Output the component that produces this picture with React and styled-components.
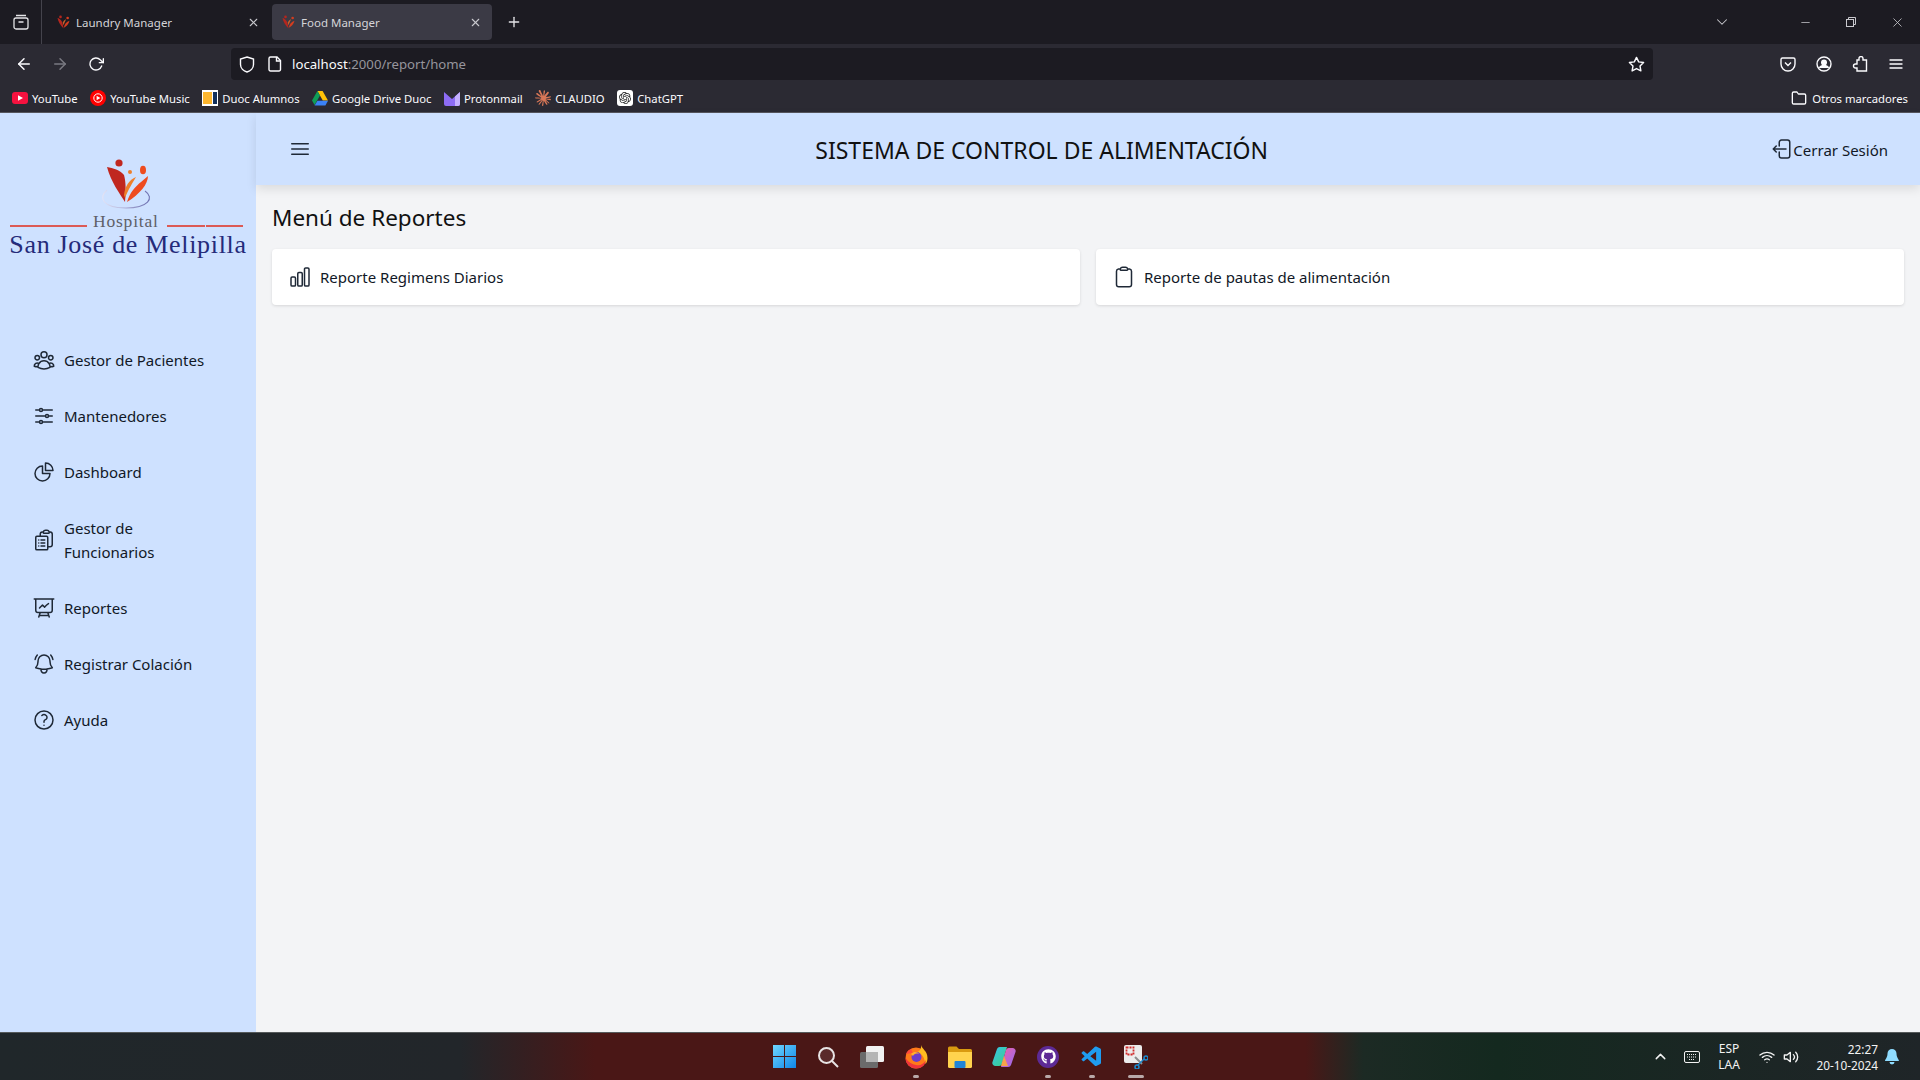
import React from 'react'
import styled, { createGlobalStyle } from 'styled-components'
import {
  HiOutlineUserGroup,
  HiOutlineAdjustmentsHorizontal,
  HiOutlineChartPie,
  HiOutlineClipboardDocumentList,
  HiOutlinePresentationChartLine,
  HiOutlineBellAlert,
  HiOutlineQuestionMarkCircle,
  HiOutlineChartBar,
  HiOutlineClipboard,
  HiOutlineArrowLeftStartOnRectangle,
  HiOutlineBars3,
} from 'react-icons/hi2'
import { FiArrowLeft, FiArrowRight, FiRotateCw, FiStar, FiX, FiPlus, FiChevronDown, FiChevronUp, FiMinus, FiFolder, FiMenu, FiWifi, FiVolume2 } from 'react-icons/fi'
import { SiClaude, SiOpenai } from 'react-icons/si'
import { FaGithub } from 'react-icons/fa'
import { VscVscode } from 'react-icons/vsc'

const Global = createGlobalStyle`
html, body { margin: 0; padding: 0; background: #f3f4f6; }
* { box-sizing: border-box; }
body { font-family: "Noto Sans", "Open Sans", sans-serif; color: #111827; }
`

const Screen = styled.div`
width: 1920px;
height: 1080px;
display: flex;
flex-direction: column;
overflow: hidden;
`

/* browser chrome */
const TabBar = styled.div`
height: 44px;
flex: none;
background: #1c1b22;
display: flex;
align-items: flex-start;
color: #fbfbfe;
`
const TabsButton = styled.div`
width: 42px;
height: 44px;
display: flex;
align-items: center;
justify-content: center;
border-right: 1px solid #44434c;
margin-right: 5px;
`
const Tab = styled.div`
width: ${p => p.$width}px;
height: 36px;
margin-top: 4px;
margin-right: ${p => p.$gap || 0}px;
border-radius: 4px;
padding: 0 10px 0 9px;
display: flex;
align-items: center;
gap: 5px;
background: ${p => (p.$active ? '#3b3a45' : 'transparent')};
font-size: 11.5px;
color: #d4d4d8;
`
const TabTitle = styled.span`
flex: 1;
`
const NewTab = styled.div`
width: 44px;
height: 44px;
display: flex;
align-items: center;
justify-content: center;
`
const WindowControls = styled.div`
margin-left: auto;
display: flex;
align-items: center;
height: 44px;
color: #c9c9ce;
`
const ListAll = styled.div`
display: flex;
margin-right: 51px;
`
const WinButton = styled.div`
width: 46px;
display: flex;
justify-content: center;
`
const NavBar = styled.div`
height: 44px;
flex: none;
background: #2b2a33;
display: flex;
align-items: center;
color: #fbfbfe;
padding: 0 0 4px 6px;
`
const NavButton = styled.div`
width: 36px;
display: flex;
justify-content: center;
color: ${p => (p.$off ? '#7a7a82' : '#fbfbfe')};
`
const UrlBar = styled.div`
width: 1422px;
height: 32px;
margin-left: 117px;
background: #1c1b22;
border-radius: 4px;
display: flex;
align-items: center;
padding: 0 6px 0 2px;
font-size: 13.2px;
`
const UrlIcon = styled.div`
width: 28px;
display: flex;
justify-content: center;
margin-right: ${p => p.$gap || 0}px;
`
const UrlHost = styled.span`
color: #fbfbfe;
`
const UrlPath = styled.span`
color: #96959c;
`
const UrlStar = styled.div`
margin-left: auto;
display: flex;
margin-right: 2px;
`
const NavTools = styled.div`
display: flex;
margin-left: 117px;
`
const NavTool = styled.div`
width: 36px;
display: flex;
justify-content: center;
`
const Bookmarks = styled.div`
height: 25px;
flex: none;
background: #2b2a33;
border-bottom: 1px solid #56565e;
display: flex;
align-items: center;
padding: 0 12px 4px 12px;
font-size: 11.3px;
color: #fbfbfe;
`
const Bookmark = styled.div`
display: flex;
align-items: center;
gap: 4px;
margin-right: ${p => p.$gap}px;
`
const OtherBookmarks = styled.div`
margin-left: auto;
display: flex;
align-items: center;
gap: 5px;
`

/* app */
const App_ = styled.div`
flex: 1;
min-height: 0;
display: flex;
`
const Sidebar = styled.aside`
width: 256px;
flex: none;
background: #cee1ff;
display: flex;
flex-direction: column;
`
const LogoBox = styled.div`
height: 227px;
padding: 45px 10px 0 10px;
display: flex;
flex-direction: column;
align-items: center;
`
const Emblem = styled.svg`
width: 60px;
height: 56px;
display: block;
`
const RuleRow = styled.div`
width: 236px;
height: 20px;
margin-top: 2px;
display: flex;
align-items: center;
gap: 1px;
`
const Rule = styled.div`
height: 2px;
background: #dc5a55;
width: ${p => p.$width}px;
`
const HospitalWord = styled.div`
font-family: "Liberation Serif", serif;
font-size: 17.5px;
line-height: 20px;
letter-spacing: 0.8px;
color: #5f6068;
margin: -11px 7px 0 5px;
`
const HospitalName = styled.div`
font-family: "Liberation Serif", serif;
font-size: 26px;
line-height: 28px;
margin-top: -5px;
letter-spacing: 0.68px;
white-space: nowrap;
color: #252b7a;
`
const NavList = styled.nav`
display: flex;
flex-direction: column;
gap: 16px;
padding: 0 16px;
`
const NavItem = styled.div`
display: flex;
align-items: center;
gap: 8px;
padding: 8px 16px;
font-size: 15px;
line-height: 24px;
svg { flex: none; width: 24px; height: 24px; color: #1f2937; }
`
const Content = styled.div`
flex: 1;
min-width: 0;
display: flex;
flex-direction: column;
background: #f3f4f6;
`
const Header = styled.header`
height: 72px;
flex: none;
background: #cee1ff;
box-shadow: 0 4px 10px rgba(0, 0, 0, 0.1);
display: flex;
align-items: center;
padding: 0 32px 0 32px;
z-index: 1;
`
const MenuButton = styled.div`
display: flex;
color: #1f2937;
`
const HeaderTitle = styled.h1`
flex: 1;
margin: 0;
padding-top: 2px;
text-align: center;
font-weight: 400;
font-size: 23px;
color: #111;
`
const Logout = styled.div`
display: flex;
align-items: center;
font-size: 15px;
color: #111827;
svg { color: #1f2937; margin-right: -2px; }
`
const LogoutLabel = styled.span`
padding-top: 2px;
`
const Main = styled.main`
padding: 17px 16px 16px;
`
const PageTitle = styled.h2`
margin: 0 0 15px 0;
font-weight: 400;
font-size: 22.5px;
line-height: 32px;
color: #111;
`
const CardGrid = styled.div`
display: grid;
grid-template-columns: 1fr 1fr;
gap: 16px;
`
const Card = styled.div`
height: 56px;
background: #fff;
border-radius: 4px;
box-shadow: 0 1px 3px rgba(0, 0, 0, 0.12);
display: flex;
align-items: center;
gap: 8px;
padding: 0 16px;
font-size: 15px;
svg { color: #1f2937; }
`

/* taskbar */
const Taskbar = styled.div`
height: 48px;
flex: none;
position: relative;
border-top: 1px solid #55595a;
background: linear-gradient(90deg, #20272a 0%, #22262a 24%, #4a1716 31%, #4a1716 68%, #1c2a24 71%, #14291f 78%, #1b2624 90%, #1f2528 100%);
display: flex;
align-items: center;
justify-content: flex-end;
padding-right: 14px;
color: #f3f3f3;
`
const TaskApps = styled.div`
position: absolute;
left: 762px;
top: 0;
display: flex;
`
const TaskApp = styled.div`
width: 44px;
height: 47px;
display: flex;
align-items: center;
justify-content: center;
position: relative;
`
const RunDot = styled.div`
position: absolute;
left: 50%;
bottom: 2px;
transform: translateX(-50%);
width: ${p => (p.$wide ? 16 : 6)}px;
height: 3px;
border-radius: 2px;
background: #b9a9a9;
`
const GithubBadge = styled.div`
width: 22px;
height: 22px;
border-radius: 50%;
background: #5d2a96;
display: flex;
align-items: center;
justify-content: center;
color: #fff;
`
const ChatBadge = styled.div`
width: 16px;
height: 16px;
border-radius: 3px;
background: #fff;
display: flex;
align-items: center;
justify-content: center;
color: #222;
`
const Tray = styled.div`
display: flex;
align-items: center;
`
const TrayIcon = styled.div`
display: flex;
justify-content: center;
width: ${p => p.$width}px;
`
const Lang = styled.div`
width: 40px;
margin: 0 6px 0 3px;
text-align: center;
font-size: 12px;
line-height: 16px;
`
const Clock = styled.div`
width: 70px;
margin-left: 5px;
text-align: right;
font-size: 11.8px;
line-height: 16px;
white-space: nowrap;
`

const Favicon = () => (
  <svg width="15" height="15" viewBox="0 0 40 40">
    <path d="M4 8 C12 10 18 16 20 36 C12 28 6 18 4 8Z" fill="#b5261e" />
    <path d="M21 34 C22 24 28 18 36 15 C34 24 28 30 21 34Z" fill="#d43d1f" />
    <path d="M18 20 C20 15 23 13 27 11 C24 16 22 22 20 27Z" fill="#c9602a" />
    <circle cx="12" cy="5" r="3.5" fill="#b5261e" />
    <circle cx="31" cy="8" r="3.5" fill="#d43d1f" />
  </svg>
)

const Logo = () => (
  <Emblem viewBox="0 0 60 56">
    <defs>
      <linearGradient id="ring" x1="0" x2="1">
        <stop offset="0" stopColor="#e2e3f5" />
        <stop offset="1" stopColor="#6d6fb0" />
      </linearGradient>
    </defs>
    <path d="M9 32 C0 40 5 50 28 50 C50 50 57 40 47 33" fill="none" stroke="url(#ring)" strokeWidth="1.1" />
    <path d="M9 9 C15 10 22 12 26 17 C28 24 28 34 27 44 C22 36 13 24 9 9Z" fill="#c0271f" />
    <path d="M29 44 C32 34 38 28 43 24 L50 18 C50 26 42 36 29 44Z" fill="#ee4b1f" />
    <path d="M26 37 C27 28 31 22 38 19 C34 26 31 30 27 40Z" fill="#ee7f2b" />
    <circle cx="21" cy="5" r="3.6" fill="#c0271f" />
    <circle cx="32" cy="14" r="2" fill="#ee7f2b" />
    <ellipse cx="45" cy="12" rx="3" ry="4.3" fill="#ee4b1f" />
  </Emblem>
)

const YouTubeIcon = () => (
  <svg width="16" height="12" viewBox="0 0 16 12"><rect width="16" height="12" rx="3" fill="#f5123f" /><path d="M6 3.2 11 6 6 8.8Z" fill="#fff" /></svg>
)
const YouTubeMusicIcon = () => (
  <svg width="16" height="16" viewBox="0 0 16 16"><circle cx="8" cy="8" r="8" fill="#f00" /><circle cx="8" cy="8" r="4.2" fill="none" stroke="#fff" strokeWidth="1" /><path d="M6.6 5.8 10.4 8 6.6 10.2Z" fill="#fff" /></svg>
)
const DuocIcon = () => (
  <svg width="16" height="16" viewBox="0 0 16 16"><rect width="16" height="16" fill="#fff" /><rect x="1" y="2" width="9" height="12" fill="#fdb62f" /><rect x="11" y="2" width="4" height="12" fill="#14315c" /></svg>
)
const DriveIcon = () => (
  <svg width="16" height="15" viewBox="0 0 16 15"><path d="M5.4 0h5.2l5.4 9.5h-5.2Z" fill="#ffc107" /><path d="M5.4 0 0 9.5 2.6 14 8 4.6Z" fill="#0f9d58" /><path d="M2.6 14.5h10.8L16 9.8H5.4Z" fill="#3b82f6" /></svg>
)
const ProtonIcon = () => (
  <svg width="16" height="15" viewBox="0 0 16 15"><path d="M0 1 8 8l8-7v12a2 2 0 0 1-2 2H2a2 2 0 0 1-2-2Z" fill="#8d6cf5" /><path d="M16 1v12a2 2 0 0 1-2 2h-3V5.500Z" fill="#c4b0ff" /></svg>
)

const ShieldIcon = () => (
  <svg width="16" height="17" viewBox="0 0 16 17" fill="none" stroke="#fbfbfe" strokeWidth="1.4"><path d="M8 1 14.500 3v5.500C14.500 12 11.500 15 8 16 4.500 15 1.500 12 1.500 8.500V3Z" /></svg>
)
const PageIcon = () => (
  <svg width="14" height="16" viewBox="0 0 14 16" fill="none" stroke="#fbfbfe" strokeWidth="1.4"><path d="M2.500 1H9l3.500 3.500V13.500a1.500 1.500 0 0 1-1.500 1.500H2.500A1.500 1.500 0 0 1 1 13.500V2.500A1.500 1.500 0 0 1 2.500 1Z" /><path d="M8.500 1v4h4" /></svg>
)
const TabsIcon = () => (
  <svg width="16" height="16" viewBox="0 0 16 16" fill="none" stroke="#e4e4e7" strokeWidth="1.3"><rect x="1" y="4" width="14" height="11" rx="2" /><path d="M3 1.500h10M5.500 8h5" /></svg>
)
const PocketIcon = () => (
  <svg width="16" height="16" viewBox="0 0 16 16" fill="none" stroke="#fbfbfe" strokeWidth="1.4"><path d="M2.500 2h11A1.500 1.500 0 0 1 15 3.500V8A7 7 0 0 1 1 8V3.500A1.500 1.500 0 0 1 2.500 2Z" /><path d="M5 6.500 8 9.500 11 6.500" /></svg>
)
const ProfileIcon = () => (
  <svg width="16" height="16" viewBox="0 0 16 16" fill="none" stroke="#fbfbfe" strokeWidth="1.4"><circle cx="8" cy="8" r="7" /><circle cx="8" cy="6.500" r="2.300" fill="#fbfbfe" /><path d="M3.500 12c1-2 2.500-2.500 4.500-2.500s3.500.5 4.500 2.500" fill="#fbfbfe" /></svg>
)
const ExtensionIcon = () => (
  <svg width="16" height="16" viewBox="0 0 16 16" fill="none" stroke="#fbfbfe" strokeWidth="1.4"><path d="M7 3V2.500a2 2 0 0 1 4 0V4h3.500v11H5v-3H3.500a2 2 0 0 1 0-4H5V4h2Z" /></svg>
)
const RestoreIcon = () => (
  <svg width="10" height="10" viewBox="0 0 10 10" fill="none" stroke="#c9c9ce"><rect x=".5" y="2.500" width="7" height="7" /><path d="M2.500 2.500v-2h7v7h-2" /></svg>
)
const KeyboardIcon = () => (
  <svg width="16" height="12" viewBox="0 0 16 12" fill="none" stroke="#f3f3f3"><rect x=".5" y=".5" width="15" height="11" rx="1.500" /><path d="M3 3.500h10M3 6h10M5 8.500h6" strokeDasharray="1 1" /></svg>
)
const BellIcon = () => (
  <svg width="14" height="16" viewBox="0 0 14 16" fill="#8fdcff"><path d="M7 0a4.500 4.500 0 0 1 4.500 4.500c0 4 2.500 6 2.500 7.500H0c0-1.500 2.500-3.500 2.500-7.500A4.500 4.500 0 0 1 7 0ZM4.500 13h5a2.500 2.500 0 0 1-5 0Z" /></svg>
)
const WindowsIcon = () => (
  <svg width="23" height="23" viewBox="0 0 23 23"><defs><linearGradient id="win" x1="0" y1="0" x2="1" y2="1"><stop offset="0" stopColor="#6fd6ff" /><stop offset="1" stopColor="#0f86e8" /></linearGradient></defs><path d="M0 0h11v11H0ZM12 0h11v11H12ZM0 12h11v11H0ZM12 12h11v11H12Z" fill="url(#win)" /></svg>
)
const SearchIcon = () => (
  <svg width="22" height="22" viewBox="0 0 22 22" fill="none"><circle cx="9.500" cy="9.500" r="7.500" stroke="#e8e4e4" strokeWidth="2" fill="#5a2a2a" /><path d="M15 15l6 6" stroke="#e8e4e4" strokeWidth="2" /></svg>
)
const TaskViewIcon = () => (
  <svg width="24" height="22" viewBox="0 0 24 22"><rect x="0" y="6" width="18" height="16" rx="1.500" fill="#6b6b6b" /><rect x="6" y="0" width="18" height="16" rx="1.500" fill="#f2f2f2" /><rect x="6" y="6" width="12" height="10" fill="#b5b5b5" /></svg>
)
const FirefoxIcon = () => (
  <svg width="24" height="24" viewBox="0 0 24 24">
    <circle cx="12" cy="13" r="10.500" fill="#ff7a1a" />
    <path d="M17 0c1 4 6.500 6 6.500 13 0 3-1 5-2 6-1-6-3-10-8-12 2-1 4-3 3.500-7Z" fill="#ffbc20" />
    <path d="M2 9c1-3 3-4 5-5l2 4Z" fill="#ff4a3d" />
    <circle cx="12.500" cy="12" r="5" fill="#6d3cc9" />
    <path d="M7 9c3-3 7-2 8 0-3-1-5 0-6 2Z" fill="#ffb02a" />
    <path d="M1.500 13c0 6 5 10.500 10.500 10.500s9.500-3.500 10-8.500c-2 4-6 6-10 5-4-.8-8-3-10.500-7Z" fill="#f0353c" />
  </svg>
)
const FolderIcon = () => (
  <svg width="24" height="22" viewBox="0 0 24 22"><path d="M0 2a1.500 1.500 0 0 1 1.500-1.500h7L11 3h11.500A1.500 1.500 0 0 1 24 4.500V8H0Z" fill="#d99a10" /><path d="M0 6h24v14.500a1.500 1.500 0 0 1-1.500 1.500h-21A1.500 1.500 0 0 1 0 20.500Z" fill="#ffd34e" /><rect x="6.500" y="15" width="11" height="7" rx="1" fill="#1f84d6" /></svg>
)
const CopilotIcon = () => (
  <svg width="24" height="24" viewBox="0 0 24 24"><defs><linearGradient id="cop1" x1="0" y1="0" x2="1" y2="1"><stop offset="0" stopColor="#37c4ef" /><stop offset="1" stopColor="#3ccf7e" /></linearGradient><linearGradient id="cop2" x1="0" y1="0" x2="1" y2="1"><stop offset="0" stopColor="#f45fa4" /><stop offset="1" stopColor="#8f6bf5" /></linearGradient></defs><path d="M8 2h7l-5 17a3 3 0 0 1-3 2H3a3 3 0 0 1-2.500-4L5 4a3 3 0 0 1 3-2Z" fill="url(#cop1)" /><path d="M16 22H9l5-17a3 3 0 0 1 3-2h4a3 3 0 0 1 2.500 4L19 20a3 3 0 0 1-3 2Z" fill="url(#cop2)" /><path d="M9 21 12 11l4 10Z" fill="#f7a34a" /></svg>
)
const SnipIcon = () => (
  <svg width="24" height="24" viewBox="0 0 24 24" fill="none"><rect x="0" y="0" width="18" height="18" rx="2" fill="#ececec" /><rect x="2.500" y="2.500" width="7" height="7" fill="none" stroke="#d12b2b" strokeWidth="1.800" strokeDasharray="2 1" /><path d="M11 12l7 7" stroke="#8d8d8d" strokeWidth="2" /><circle cx="13" cy="22" r="2" stroke="#1b8bd0" strokeWidth="1.500" /><circle cx="22" cy="13" r="2" stroke="#1b8bd0" strokeWidth="1.500" /><path d="M14 20l6-6" stroke="#1b8bd0" strokeWidth="1.500" /></svg>
)

const bookmarks = [
  { icon: <YouTubeIcon />, label: 'YouTube', gap: 12.5 },
  { icon: <YouTubeMusicIcon />, label: 'YouTube Music', gap: 12.5 },
  { icon: <DuocIcon />, label: 'Duoc Alumnos', gap: 12.5 },
  { icon: <DriveIcon />, label: 'Google Drive Duoc', gap: 12.5 },
  { icon: <ProtonIcon />, label: 'Protonmail', gap: 12.5 },
  { icon: <SiClaude size={16} color="#d97757" />, label: 'CLAUDIO', gap: 12.5 },
  { icon: <ChatBadge><SiOpenai size={12} /></ChatBadge>, label: 'ChatGPT', gap: 0 },
]

const navItems = [
  { icon: <HiOutlineUserGroup />, label: 'Gestor de Pacientes' },
  { icon: <HiOutlineAdjustmentsHorizontal />, label: 'Mantenedores' },
  { icon: <HiOutlineChartPie />, label: 'Dashboard' },
  { icon: <HiOutlineClipboardDocumentList />, label: <>Gestor de<br />Funcionarios</> },
  { icon: <HiOutlinePresentationChartLine />, label: 'Reportes' },
  { icon: <HiOutlineBellAlert />, label: 'Registrar Colación' },
  { icon: <HiOutlineQuestionMarkCircle />, label: 'Ayuda' },
]

const taskApps = [
  { icon: <WindowsIcon /> },
  { icon: <SearchIcon /> },
  { icon: <TaskViewIcon /> },
  { icon: <FirefoxIcon />, dot: true },
  { icon: <FolderIcon /> },
  { icon: <CopilotIcon /> },
  { icon: <GithubBadge><FaGithub size={15} /></GithubBadge>, dot: true },
  { icon: <VscVscode size={24} color="#1f9cf0" />, dot: true },
  { icon: <SnipIcon />, dot: true, wide: true },
]

export default function App() {
  return (
    <Screen>
      <Global />
      <TabBar>
        <TabsButton><TabsIcon /></TabsButton>
        <Tab $width={223} $gap={2}>
          <Favicon />
          <TabTitle>Laundry Manager</TabTitle>
          <FiX size={13} color="#c9c9ce" />
        </Tab>
        <Tab $width={220} $active>
          <Favicon />
          <TabTitle>Food Manager</TabTitle>
          <FiX size={13} color="#c9c9ce" />
        </Tab>
        <NewTab><FiPlus size={16} color="#e4e4e7" /></NewTab>
        <WindowControls>
          <ListAll><FiChevronDown size={18} strokeWidth={1.4} /></ListAll>
          <WinButton><FiMinus size={13} strokeWidth={1.4} /></WinButton>
          <WinButton><RestoreIcon /></WinButton>
          <WinButton><FiX size={15} strokeWidth={1.3} /></WinButton>
        </WindowControls>
      </TabBar>
      <NavBar>
        <NavButton><FiArrowLeft size={18} /></NavButton>
        <NavButton $off><FiArrowRight size={18} /></NavButton>
        <NavButton><FiRotateCw size={16} /></NavButton>
        <UrlBar>
          <UrlIcon><ShieldIcon /></UrlIcon>
          <UrlIcon $gap={3}><PageIcon /></UrlIcon>
          <UrlHost>localhost</UrlHost><UrlPath>:2000/report/home</UrlPath>
          <UrlStar><FiStar size={17} /></UrlStar>
        </UrlBar>
        <NavTools>
          <NavTool><PocketIcon /></NavTool>
          <NavTool><ProfileIcon /></NavTool>
          <NavTool><ExtensionIcon /></NavTool>
          <NavTool><FiMenu size={16} /></NavTool>
        </NavTools>
      </NavBar>
      <Bookmarks>
        {bookmarks.map((b, i) => (
          <Bookmark key={i} $gap={b.gap}>{b.icon}{b.label}</Bookmark>
        ))}
        <OtherBookmarks><FiFolder size={16} />Otros marcadores</OtherBookmarks>
      </Bookmarks>
      <App_>
        <Sidebar>
          <LogoBox>
            <Logo />
            <RuleRow>
              <Rule $width={77} />
              <HospitalWord>Hospital</HospitalWord>
              <Rule $width={38} />
              <Rule $width={37} />
            </RuleRow>
            <HospitalName>San José de Melipilla</HospitalName>
          </LogoBox>
          <NavList>
            {navItems.map((item, i) => (
              <NavItem key={i}>{item.icon}<span>{item.label}</span></NavItem>
            ))}
          </NavList>
        </Sidebar>
        <Content>
          <Header>
            <MenuButton><HiOutlineBars3 size={24} /></MenuButton>
            <HeaderTitle>SISTEMA DE CONTROL DE ALIMENTACIÓN</HeaderTitle>
            <Logout>
              <HiOutlineArrowLeftStartOnRectangle size={24} />
              <LogoutLabel>Cerrar Sesión</LogoutLabel>
            </Logout>
          </Header>
          <Main>
            <PageTitle>Menú de Reportes</PageTitle>
            <CardGrid>
              <Card><HiOutlineChartBar size={24} />Reporte Regimens Diarios</Card>
              <Card><HiOutlineClipboard size={24} />Reporte de pautas de alimentación</Card>
            </CardGrid>
          </Main>
        </Content>
      </App_>
      <Taskbar>
        <TaskApps>
          {taskApps.map((t, i) => (
            <TaskApp key={i}>{t.icon}{t.dot && <RunDot $wide={t.wide} />}</TaskApp>
          ))}
        </TaskApps>
        <Tray>
          <TrayIcon $width={36}><FiChevronUp size={17} /></TrayIcon>
          <TrayIcon $width={28}><KeyboardIcon /></TrayIcon>
          <Lang>ESP<br />LAA</Lang>
          <TrayIcon $width={24}><FiWifi size={16} /></TrayIcon>
          <TrayIcon $width={24}><FiVolume2 size={16} /></TrayIcon>
          <Clock>22:27<br />20-10-2024</Clock>
          <TrayIcon $width={28}><BellIcon /></TrayIcon>
        </Tray>
      </Taskbar>
    </Screen>
  )
}
